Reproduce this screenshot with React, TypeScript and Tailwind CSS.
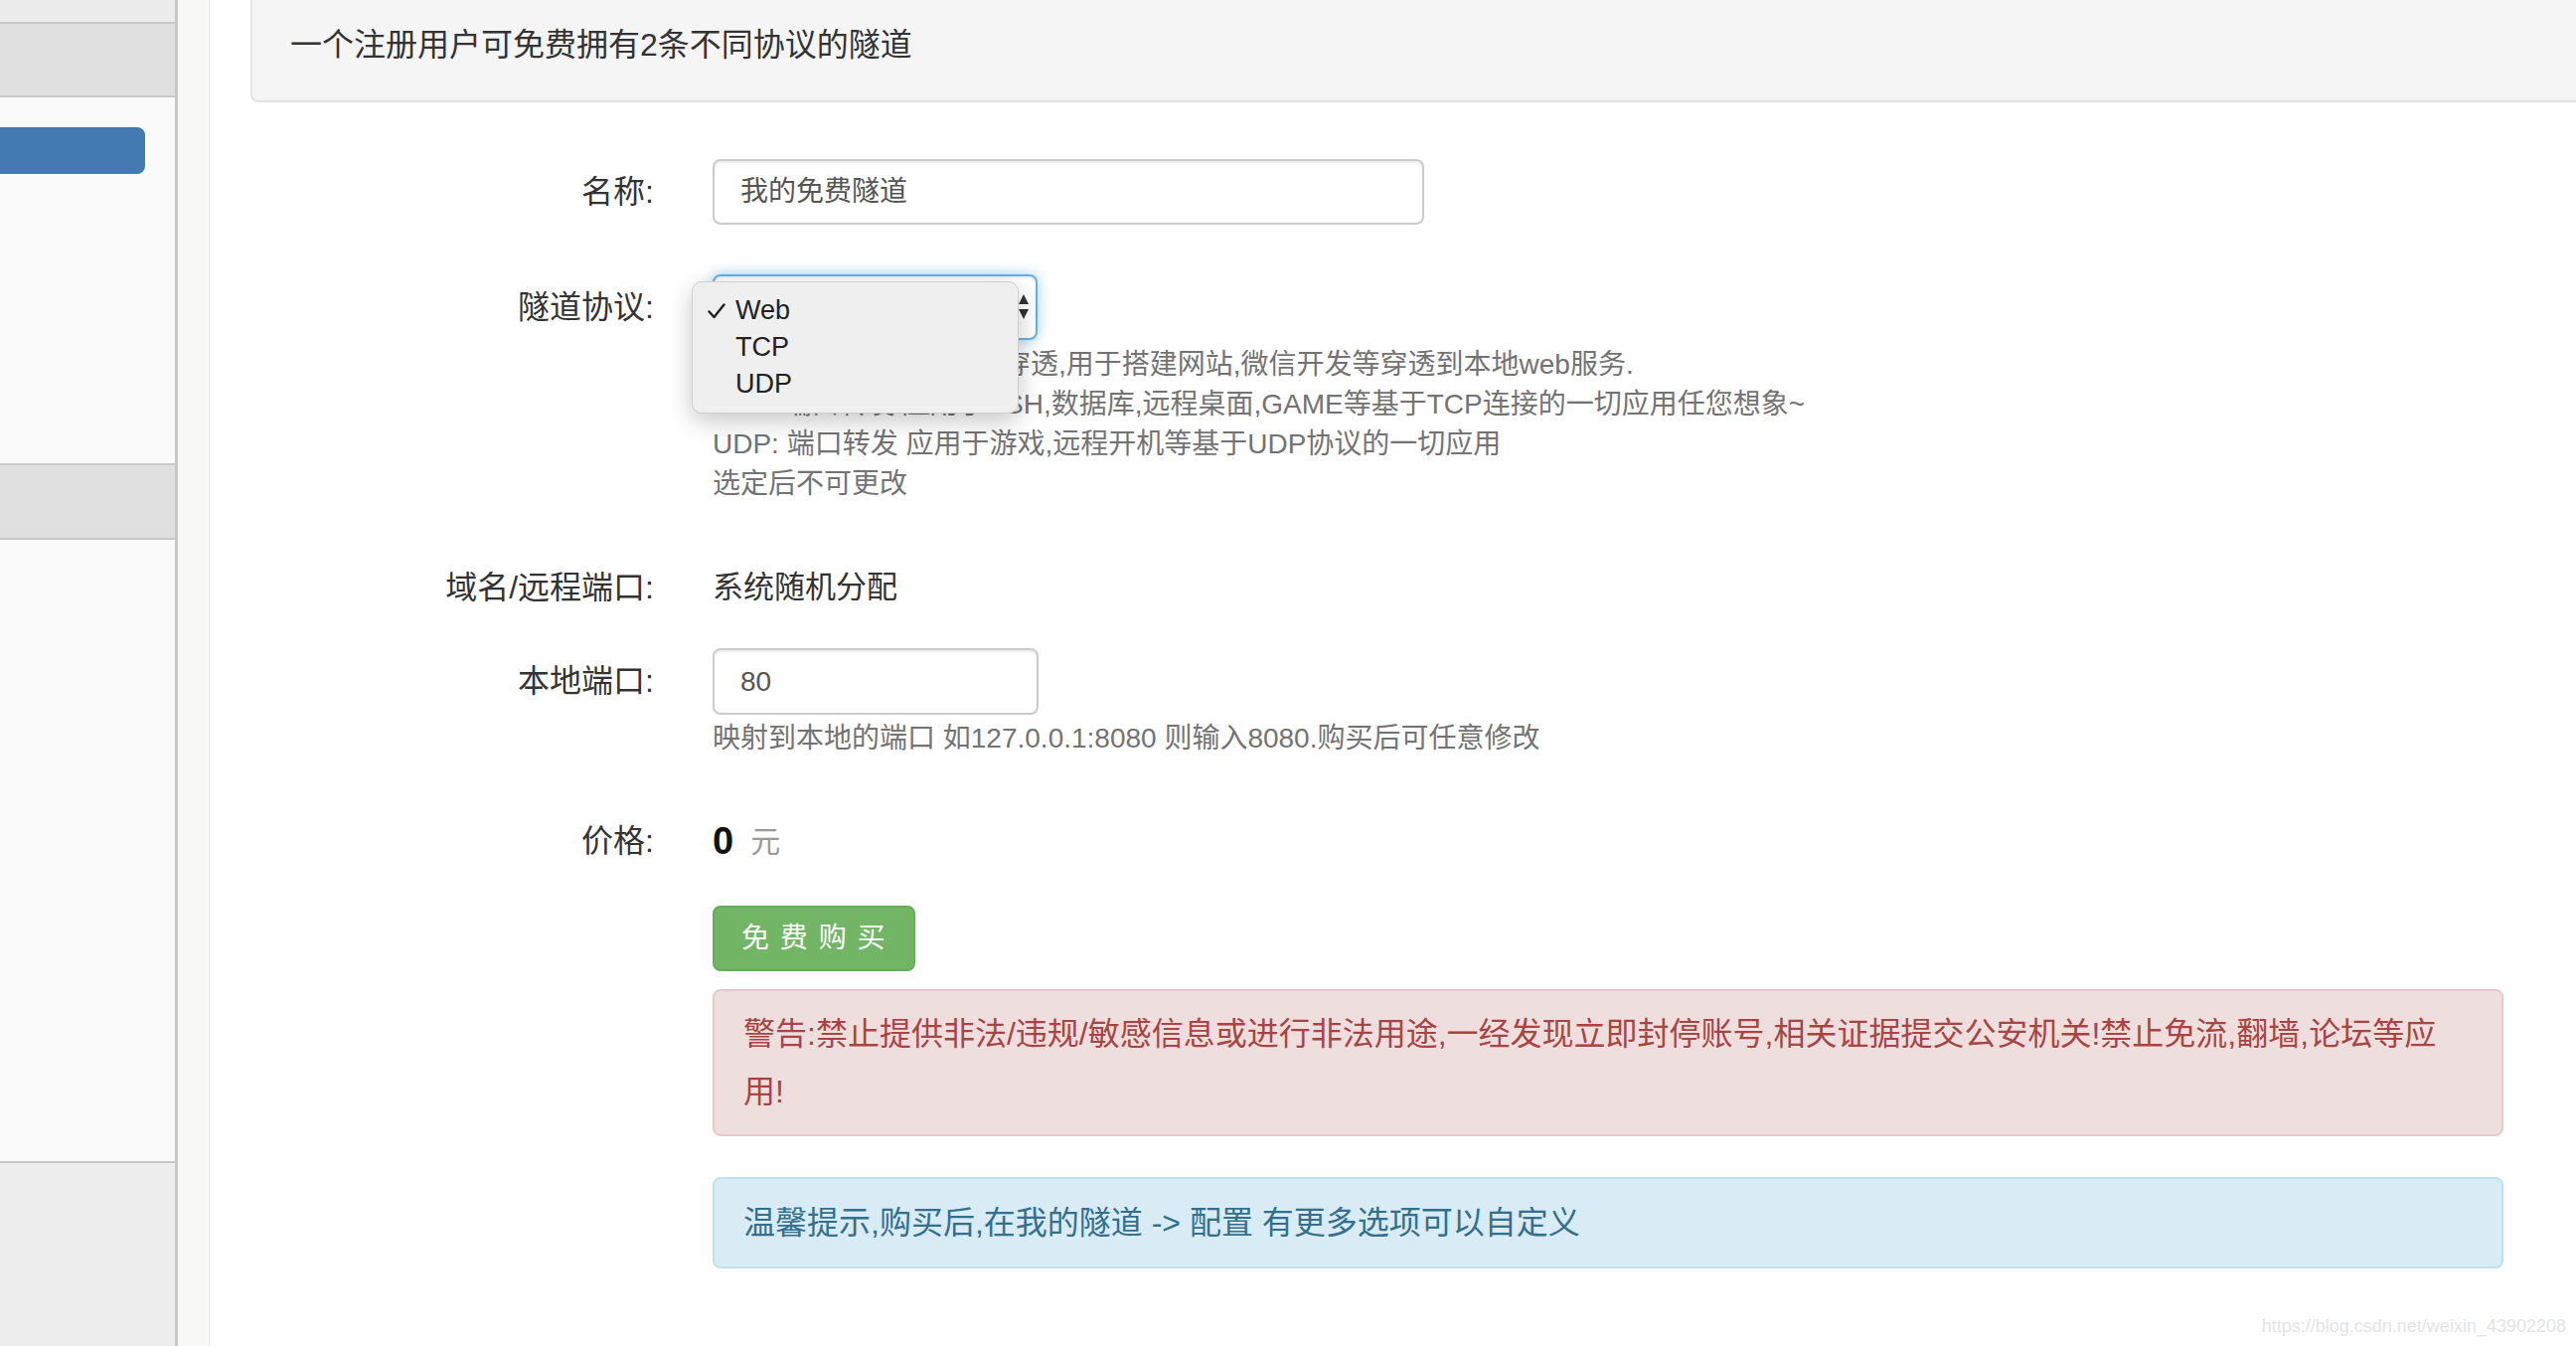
import React from 'react';

const FONT = "font-['Liberation_Sans','Noto_Sans_CJK_SC',sans-serif]";

const OPTIONS = ['Web', 'TCP', 'UDP'];

function Row({ label, children, className = '' }: { label: string; children: React.ReactNode; className?: string }) {
  return (
    <div className={`flex items-start ${className}`}>
      <div className="w-[447px] shrink-0 h-[66px] flex items-center justify-end text-[32px] text-[#333]">{label}</div>
      <div className="ml-[59px] flex flex-col">{children}</div>
    </div>
  );
}

function Sidebar() {
  return (
    <div className="w-[179px] shrink-0 flex flex-col bg-[#fafafa] border-r-[3px] border-[#c8c8c8]">
      <div className="h-[24px] bg-[#ececec] border-b-2 border-[#c8c8c8]" />
      <div className="h-[74px] bg-[#e0e0e0] border-b-2 border-[#c8c8c8]" />
      <div className="h-[368px] pt-[30px]">
        <div className="w-[146px] h-[47px] bg-[#4479b1] rounded-r-[8px]" />
      </div>
      <div className="h-[77px] bg-[#e0e0e0] border-y-2 border-[#c8c8c8]" />
      <div className="h-[625px]" />
      <div className="flex-1 bg-[#ededed] border-t-2 border-[#c8c8c8]" />
    </div>
  );
}

function ProtocolSelect() {
  return (
    <div className="relative w-[327px] h-[66px]">
      <div className="w-full h-full rounded-[8px] border-2 border-[#66afe9] bg-white flex items-center justify-between pl-[26px] pr-[7px] text-[28px] text-[#555] shadow-[inset_0_2px_2px_rgba(0,0,0,0.075),0_0_14px_rgba(102,175,233,0.6)]">
        <span>Web</span>
        <svg width="10" height="26" viewBox="0 0 10 26">
          <path d="M5 0 L10 10 L0 10 Z" fill="#333" />
          <path d="M0 15 L10 15 L5 25 Z" fill="#333" />
        </svg>
      </div>
      {/* open dropdown list */}
      <div className="absolute left-[-21px] top-[7px] w-[329px] py-[10px] rounded-[10px] border border-[#cfcfcf] bg-[#efefef] shadow-[0_8px_24px_rgba(0,0,0,0.22)] z-10">
        {OPTIONS.map((o, i) => (
          <div key={o} className="h-[37px] flex items-center text-[27px] text-[#222]">
            <span className="w-[43px] flex justify-center pl-[4px]">
              {i === 0 && (
                <svg width="18" height="16" viewBox="0 0 18 16">
                  <path d="M1.5 8.5 L6.5 14 L16.5 1.5" fill="none" stroke="#222" strokeWidth="2.4" strokeLinecap="round" strokeLinejoin="round" />
                </svg>
              )}
            </span>
            <span>{o}</span>
          </div>
        ))}
      </div>
    </div>
  );
}

export default function App() {
  return (
    <div className={`w-full h-[1354px] flex bg-white overflow-hidden ${FONT}`}>
      <Sidebar />
      <div className="w-[32px] shrink-0 bg-[#f8f8f6] border-r border-[#ececec]" />
      <div className="relative flex-1 flex flex-col">
        <div className="ml-[41px] h-[103px] bg-[#f5f5f5] border-l-2 border-b-2 border-[#e3e3e3] rounded-bl-[8px] pl-[38px] pt-[26px] leading-[38px] text-[32px] text-[#333]">
          一个注册用户可免费拥有2条不同协议的隧道
        </div>

        <Row label="名称:" className="mt-[57px]">
          <div className="w-[716px] h-[66px] rounded-[8px] border-2 border-[#ccc] flex items-center pl-[26px] text-[28px] text-[#555] shadow-[inset_0_2px_2px_rgba(0,0,0,0.075)]">
            我的免费隧道
          </div>
        </Row>

        <Row label="隧道协议:" className="mt-[50px]">
          <ProtocolSelect />
          <div className="mt-[5px] text-[28px] leading-[40px] text-[#737373]">
            <p>Web: 网站转发 HTTPS 穿透,用于搭建网站,微信开发等穿透到本地web服务.</p>
            <p>TCP: 端口转发 应用于SSH,数据库,远程桌面,GAME等基于TCP连接的一切应用任您想象~</p>
            <p>UDP: 端口转发 应用于游戏,远程开机等基于UDP协议的一切应用</p>
            <p>选定后不可更改</p>
          </div>
        </Row>

        <Row label="域名/远程端口:" className="mt-[51px]">
          <div className="h-[66px] flex items-center text-[31px] text-[#333]">系统随机分配</div>
        </Row>

        <Row label="本地端口:" className="mt-[28px]">
          <div className="w-[328px] h-[67px] rounded-[8px] border-2 border-[#ccc] flex items-center pl-[26px] text-[28px] text-[#555] shadow-[inset_0_2px_2px_rgba(0,0,0,0.075)]">
            80
          </div>
          <div className="mt-[4px] text-[28px] leading-[40px] text-[#737373]">
            映射到本地的端口 如127.0.0.1:8080 则输入8080.购买后可任意修改
          </div>
        </Row>

        <Row label="价格:" className="mt-[50px]">
          <div className="h-[66px] flex items-center">
            <span className="text-[38px] font-bold text-[#111]">0</span>
            <span className="ml-[17px] text-[30px] text-[#999]">元</span>
          </div>
        </Row>

        <div className="ml-[506px] flex flex-col">
          <button className="mt-[32px] w-[204px] h-[66px] rounded-[8px] border-2 border-[#69ab5c] bg-[#72b564] text-white text-[28px] tracking-[1.5px]">
            免 费 购 买
          </button>
          <div className="mt-[18px] w-[1802px] rounded-[8px] border-2 border-[#e6c9cc] bg-[#efdede] px-[29px] py-[14px] text-[32px] leading-[58px] text-[#a94442]">
            警告:禁止提供非法/违规/敏感信息或进行非法用途,一经发现立即封停账号,相关证据提交公安机关!禁止免流,翻墙,论坛等应<br />用!
          </div>
          <div className="mt-[41px] w-[1802px] rounded-[8px] border-2 border-[#bde3ee] bg-[#d9ebf5] px-[29px] py-[15px] text-[32px] leading-[58px] text-[#31708f]">
            温馨提示,购买后,在我的隧道 -&gt; 配置 有更多选项可以自定义
          </div>
        </div>

        <div className="absolute right-[10px] bottom-[6px] text-[18px] text-[#e4e4e4]">https://blog.csdn.net/weixin_43902208</div>
      </div>
    </div>
  );
}
